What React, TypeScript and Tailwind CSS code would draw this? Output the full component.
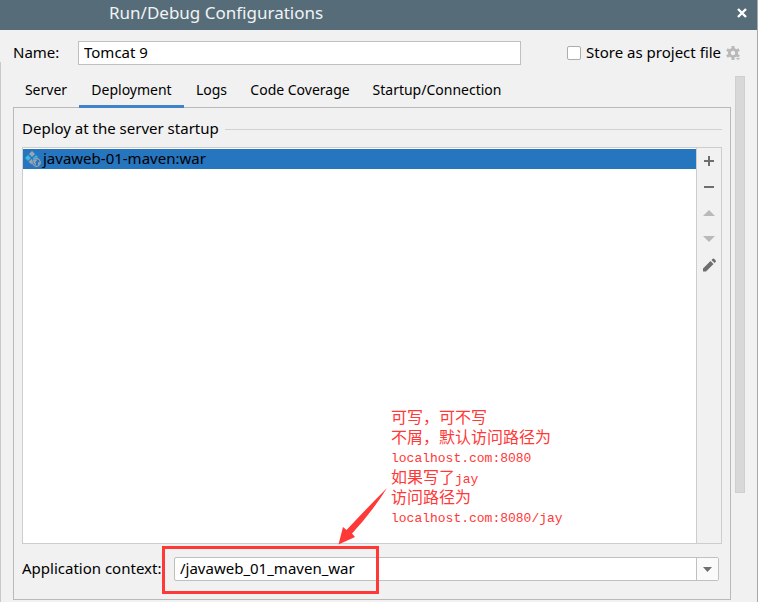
import { useState } from "react";
import type { ReactNode } from "react";

const tabs = [
  { name: "Server", width: "w-[66px]" },
  { name: "Deployment", width: "w-[105px]" },
  { name: "Logs", width: "w-[55px]" },
  { name: "Code Coverage", width: "w-[122px]" },
  { name: "Startup/Connection", width: "w-[152px]" },
];

function ToolButton({ label, disabled, children }: { label: string; disabled?: boolean; children: ReactNode }) {
  return (
    <button type="button" aria-label={label} disabled={disabled} className="flex size-[26px] items-center justify-center">
      <svg viewBox="0 0 16 16" className="size-4" aria-hidden="true">
        {children}
      </svg>
    </button>
  );
}

function ArtifactIcon() {
  return (
    <svg viewBox="0 0 16 16" className="size-4 shrink-0" aria-hidden="true">
      <path d="M7 0 10 3 7 6 4 3Z" fill="#9aa7b0" />
      <path d="M3 4 6 7 3 10 0 7Z" fill="#40b6e0" />
      <path d="M11 4 13.500 6.500 10 6.800 8.500 8.200 7.500 7.500Z" fill="#40b6e0" />
      <path d="M6.500 8 7.500 9 6.800 11 7 13.500 3.500 11Z" fill="#9aa7b0" />
      <circle cx="11.500" cy="11.500" r="3.800" fill="none" stroke="#9aa7b0" strokeWidth="1.200" />
      <path d="M8.300 9.500 11 8.400 12 9 11 10.500 10 11 11 12.500 10.500 14.500 9 12.500ZM13 11.500 15 11 14.500 13.500 13 14Z" fill="#9aa7b0" />
    </svg>
  );
}

function GearIcon() {
  return (
    <svg viewBox="0 0 16 16" className="size-4" aria-hidden="true">
      <circle cx="8" cy="8" r="3.600" fill="none" stroke="#b9b9b9" strokeWidth="2.800" />
      <path
        d="M8 1v3M8 12v3M1.900 4.500l2.600 1.500M11.500 10l2.600 1.500M1.900 11.500 4.500 10M11.500 6l2.600-1.500"
        stroke="#b9b9b9"
        strokeWidth="3"
      />
      <path d="M10 12.500h6L13 15.500Z" fill="#b9b9b9" stroke="#f1f1f1" strokeWidth=".8" />
    </svg>
  );
}

export default function App() {
  const [active, setActive] = useState("Deployment");
  return (
    <div className="flex min-h-screen flex-col border-r border-[#a9a9a9] bg-[#f1f1f1] font-['Noto_Sans','Open_Sans',sans-serif] text-[15px] leading-5 text-black">
      <header className="flex h-[30px] items-center justify-between bg-[#566d79] pr-[10px] pl-[109px] text-white">
        <h1 className="pb-1 text-[17px] leading-5 text-[#f1f3f4]">Run/Debug Configurations</h1>
        <button type="button" aria-label="Close" className="pb-1">
          <svg viewBox="0 0 10 10" className="size-[10px]" stroke="#fff" strokeWidth="2.400" aria-hidden="true">
            <path d="M1 1 9 9M9 1 1 9" />
          </svg>
        </button>
      </header>

      <div className="flex h-[46px] items-center pr-4 pl-[13px]">
        <label htmlFor="name" className="w-[65px] shrink-0 pb-0.5">
          Name:
        </label>
        <input
          id="name"
          defaultValue="Tomcat 9"
          className="h-6 min-w-0 flex-1 border border-[#c0c0c0] bg-white px-[5px] pb-0.5 outline-none"
        />
        <label className="ml-[46px] flex shrink-0 items-center gap-[5px] whitespace-nowrap">
          <input type="checkbox" className="size-[14px] appearance-none rounded-xs border border-[#adadad] bg-white" />
          <span className="pb-0.5">Store as project file</span>
        </label>
        <button type="button" aria-label="Storage options" className="ml-1">
          <GearIcon />
        </button>
      </div>

      <div className="relative flex flex-1 pr-3 pb-[2px] pl-[13px]">
        {/* Splitter edge of the configuration tree; it runs up beside the name row */}
        <span className="absolute -top-[14px] bottom-0 left-0 w-px bg-[#c9c9c9]" />
        <main className="flex min-w-0 flex-1 flex-col">
          <div role="tablist" className="flex h-8 text-sm">
            {tabs.map(({ name, width }) => (
              <button
                key={name}
                type="button"
                role="tab"
                aria-selected={name === active}
                onClick={() => setActive(name)}
                className={`${width} z-10 shrink-0 border-b-3 pb-px text-center whitespace-nowrap ${
                  name === active ? "border-[#4083c9]" : "border-transparent"
                }`}
              >
                {name}
              </button>
            ))}
          </div>

          <section className="-mt-px flex flex-1 flex-col border border-[#b9b9b9] px-2 pb-[18px]">
            <div className="flex h-[39px] items-center gap-[6px] pt-[3px]">
              <h2 className="pb-0.5">Deploy at the server startup</h2>
              <span className="h-px flex-1 bg-[#d1d1d1]" />
            </div>

            <div className="relative flex flex-1 border border-[#cdcdcd]">
              <ul className="flex-1 bg-white pt-px">
                <li className="flex h-5 items-center gap-[2px] bg-[#2675bf] pl-[2px]">
                  <ArtifactIcon />
                  <span className="pb-0.5">javaweb-01-maven:war</span>
                </li>
              </ul>
              <div className="flex w-[25px] flex-col items-center border-l border-[#cdcdcd]">
                <ToolButton label="Add">
                  <path d="M8 3v10M3 8h10" stroke="#6e6e6e" strokeWidth="2" />
                </ToolButton>
                <ToolButton label="Remove">
                  <path d="M3 8h10" stroke="#6e6e6e" strokeWidth="2" />
                </ToolButton>
                <ToolButton label="Move up" disabled>
                  <path d="M2 11h12L8 5Z" fill="#b9b9b9" />
                </ToolButton>
                <ToolButton label="Move down" disabled>
                  <path d="M2 5h12L8 11Z" fill="#b9b9b9" />
                </ToolButton>
                <ToolButton label="Edit">
                  <path
                    d="M2 11.500 9.500 4 12.500 7 5 14.500H2ZM10.500 3l1.200-1.200a1 1 0 0 1 1.400 0l1.600 1.600a1 1 0 0 1 0 1.400L13.500 6Z"
                    fill="#6e6e6e"
                  />
                </ToolButton>
              </div>

              {/* Reviewer's note, laid over the artifact list */}
              <div className="absolute bottom-[14px] left-[368px] font-['Liberation_Mono','Noto_Sans_CJK_SC',monospace] text-base leading-5 whitespace-nowrap text-[#ff3838]">
                <p className="h-5">可写，可不写</p>
                <p className="h-5">不屑，默认访问路径为</p>
                <p className="h-5 text-[13px]">localhost.com:8080</p>
                <p className="h-5">
                  如果写了<span className="text-[13px]">jay</span>
                </p>
                <p className="h-5">访问路径为</p>
                <p className="h-5 text-[13px]">localhost.com:8080/jay</p>
              </div>
              <svg
                viewBox="0 0 50 58"
                className="absolute -bottom-[2px] left-[315px] z-10 h-[58px] w-[50px]"
                fill="#ff3838"
                aria-hidden="true"
              >
                <path d="M49 1 Q30 20 8.500 43L5 40 .5 57.500 17 50 14 46.500Q34 25 49 1Z" />
              </svg>
            </div>

            <div className="relative mt-[13px] flex h-6 items-center pr-[3px]">
              <label htmlFor="context" className="w-[152px] shrink-0 pb-0.5 whitespace-nowrap">
                Application context:
              </label>
              <div className="flex h-6 min-w-0 flex-1 rounded-xs border border-[#c0c0c0] bg-white">
                <input id="context" defaultValue="/javaweb_01_maven_war" className="min-w-0 flex-1 px-[5px] pb-0.5 outline-none" />
                <button
                  type="button"
                  aria-label="Show contexts"
                  className="flex w-[22px] items-center justify-center border-l border-[#c0c0c0] bg-[#fafafa]"
                >
                  <svg viewBox="0 0 9 5" className="h-[5px] w-[9px]" fill="#6e6e6e" aria-hidden="true">
                    <path d="M0 0h9L4.500 5Z" />
                  </svg>
                </button>
              </div>
              <span className="pointer-events-none absolute -top-[11px] left-[140px] h-12 w-[217px] border-3 border-[#ff3838]" />
            </div>
          </section>
        </main>
        <div className="ml-1 h-[417px] w-[10px] border border-[#cfcfcf] bg-[#d8d8d8]" />
      </div>
    </div>
  );
}
